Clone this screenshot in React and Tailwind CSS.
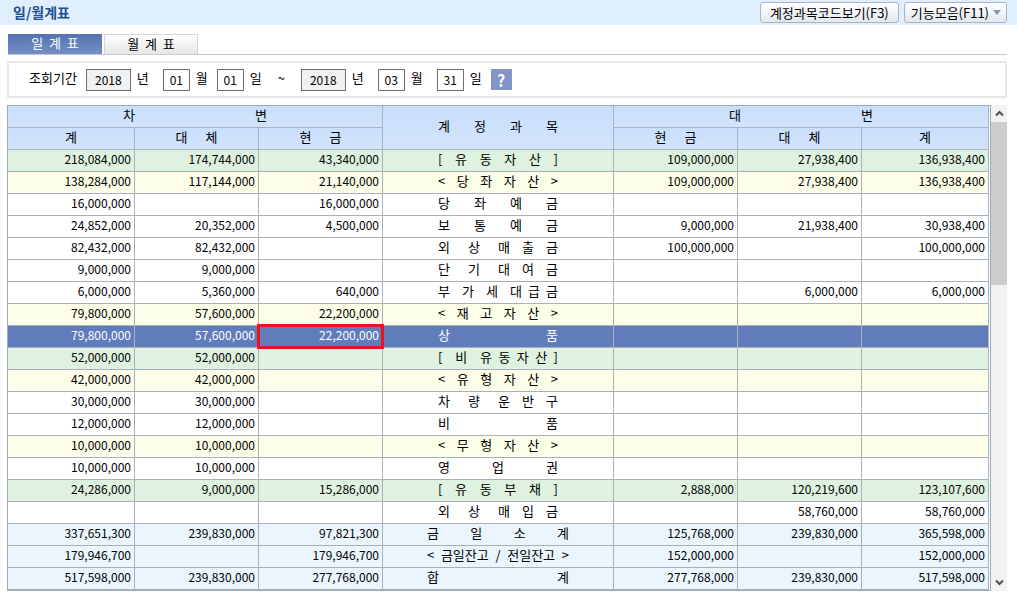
import { useState } from "react";

const FONT = "font-['Noto_Sans_CJK_KR','Liberation_Sans',sans-serif]";

// [debit total, debit transfer, debit cash, account, credit cash, credit transfer, credit total]
const rows = [
  { kind: "group", cells: ["218,084,000", "174,744,000", "43,340,000", "[  유  동  자  산  ]", "109,000,000", "27,938,400", "136,938,400"] },
  { kind: "sub", cells: ["138,284,000", "117,144,000", "21,140,000", "<  당  좌  자  산  >", "109,000,000", "27,938,400", "136,938,400"] },
  { kind: "item", cells: ["16,000,000", "", "16,000,000", "당 좌 예 금", "", "", ""] },
  { kind: "item", cells: ["24,852,000", "20,352,000", "4,500,000", "보 통 예 금", "9,000,000", "21,938,400", "30,938,400"] },
  { kind: "item", cells: ["82,432,000", "82,432,000", "", "외   상   매  출  금", "100,000,000", "", "100,000,000"] },
  { kind: "item", cells: ["9,000,000", "9,000,000", "", "단   기   대  여  금", "", "", ""] },
  { kind: "item", cells: ["6,000,000", "5,360,000", "640,000", "부  가  세  대 급 금", "", "6,000,000", "6,000,000"] },
  { kind: "sub", cells: ["79,800,000", "57,600,000", "22,200,000", "<  재  고  자  산  >", "", "", ""] },
  { kind: "item", cells: ["79,800,000", "57,600,000", "22,200,000", "상 품", "", "", ""] },
  { kind: "group", cells: ["52,000,000", "52,000,000", "", "[  비  유 동 자 산 ]", "", "", ""] },
  { kind: "sub", cells: ["42,000,000", "42,000,000", "", "<  유  형  자  산  >", "", "", ""] },
  { kind: "item", cells: ["30,000,000", "30,000,000", "", "차   량   운  반  구", "", "", ""] },
  { kind: "item", cells: ["12,000,000", "12,000,000", "", "비 품", "", "", ""] },
  { kind: "sub", cells: ["10,000,000", "10,000,000", "", "<  무  형  자  산  >", "", "", ""] },
  { kind: "item", cells: ["10,000,000", "10,000,000", "", "영 업 권", "", "", ""] },
  { kind: "group", cells: ["24,286,000", "9,000,000", "15,286,000", "[  유  동  부  채  ]", "2,888,000", "120,219,600", "123,107,600"] },
  { kind: "item", cells: ["", "", "", "외   상   매  입  금", "", "58,760,000", "58,760,000"] },
];

const totals = [
  ["337,651,300", "239,830,000", "97,821,300", "금 일 소 계", "125,768,000", "239,830,000", "365,598,000"],
  ["179,946,700", "", "179,946,700", "< 금일잔고 / 전일잔고 >", "152,000,000", "", "152,000,000"],
  ["517,598,000", "239,830,000", "277,768,000", "합 계", "277,768,000", "239,830,000", "517,598,000"],
];

const rowColor = {
  group: "bg-[#dff2e1]",
  sub: "bg-[#fdfee9]",
  item: "bg-white",
  total: "bg-[#eaf5fe]",
};

const Spread = ({ text, width }) => (
  <span className={`block mx-auto whitespace-pre-wrap [text-align-last:justify] ${width}`}>{text}</span>
);

const HeadCell = ({ children, ...props }) => (
  <th
    {...props}
    className="h-[22px] p-0 pb-[3px] border-r border-b border-[#a3b4c8] bg-linear-to-b from-[#c9dffb] to-[#d3e4fc] text-[13px] leading-[18px] font-normal"
  >
    {children}
  </th>
);

const LedgerRow = ({ kind, cells, selected, marked, onSelect }) => (
  <tr onClick={onSelect} className={selected ? "bg-[#607cbb] text-white" : rowColor[kind]}>
    {cells.map((cell, i) => (
      <td
        key={i}
        className={`relative h-[22px] p-0 pb-[3px] border-r border-b border-[#a9b0b8] leading-[18px] ${
          i === 3 ? "text-[13px]" : "pr-[3px] text-right text-[12px]"
        }`}
      >
        {i === 3 ? <Spread text={cell} width={kind === "total" ? "w-[142px]" : "w-[120px]"} /> : cell}
        {marked && i === 2 && <span className="absolute -inset-[2px] border-3 border-[#ea1420] z-10" />}
      </td>
    ))}
  </tr>
);

const DateField = ({ label, unit, value, onChange, year }) => (
  <label className="flex items-center gap-[6px]">
    <input
      aria-label={label}
      value={value}
      onChange={(e) => onChange(e.target.value)}
      className={`h-[22px] border border-[#6f6f6f] text-center text-xs ${
        year ? "w-[45px] bg-[#f1f1f1]" : "w-[27px] bg-white"
      }`}
    />
    <span className="pb-[3px]">{unit}</span>
  </label>
);

const Chevron = ({ d }) => (
  <svg width="9" height="7" viewBox="0 0 9 7" fill="none" stroke="#505050" strokeWidth="2">
    <path d={d} />
  </svg>
);

const App = () => {
  const [tab, setTab] = useState("daily");
  const [selected, setSelected] = useState(8);
  const [period, setPeriod] = useState({
    y1: "2018", m1: "01", d1: "01", y2: "2018", m2: "03", d2: "31",
  });

  const bind = (key) => ({
    value: period[key],
    onChange: (value) => setPeriod({ ...period, [key]: value }),
  });

  const tabClass = (name) =>
    `w-[94px] h-5 pb-[2px] text-[13px] leading-[18px] whitespace-pre ${
      tab === name
        ? "bg-linear-to-b from-[#5672ae] to-[#7390c6] text-white"
        : "bg-linear-to-b from-white to-[#e6e6e6] border border-b-0 border-[#d6d6d6] text-black"
    }`;

  const topButton =
    "h-[21px] flex items-center border border-[#a9b4c2] rounded-[3px] bg-linear-to-b from-white to-[#e3e9f1] text-[13px] leading-[18px] whitespace-nowrap";

  return (
    <div className={`min-h-screen bg-white text-black text-[13px] ${FONT}`}>
      {/* Title bar */}
      <header className="h-[25px] flex items-center justify-between pl-[13px] pr-[10px] bg-[#dfeffd]">
        <h1 className="font-bold text-[14px] text-[#1f4f93]">일/월계표</h1>
        <div className="flex gap-[5px]">
          <button className={`${topButton} px-[9px]`}>계정과목코드보기(F3)</button>
          <button className={`${topButton} pl-[6px] pr-[5px] gap-[4px]`}>
            기능모음(F11)
            <svg width="8" height="5" viewBox="0 0 8 5">
              <path d="M0 0h8L4 5z" fill="#8496ad" />
            </svg>
          </button>
        </div>
      </header>

      <main className="pl-[7px] pr-[10px]">
        {/* Tabs */}
        <div role="tablist" className="flex gap-[2px] mt-[9px] ml-px border-b border-[#c9c9c9]">
          <button role="tab" aria-selected={tab === "daily"} className={tabClass("daily")} onClick={() => setTab("daily")}>
            {"일  계  표"}
          </button>
          <button role="tab" aria-selected={tab === "monthly"} className={tabClass("monthly")} onClick={() => setTab("monthly")}>
            {"월  계  표"}
          </button>
        </div>

        {/* Period filter */}
        <div className="flex items-center h-[37px] mt-[6px] pl-[20px] border-2 border-[#e3e9ee]">
          <span className="mr-[9px] pb-[3px]">조회기간</span>
          <DateField label="시작 년" unit="년" year {...bind("y1")} />
          <div className="flex gap-[9px] ml-[14px]">
            <DateField label="시작 월" unit="월" {...bind("m1")} />
            <DateField label="시작 일" unit="일" {...bind("d1")} />
          </div>
          <span className="w-[39px] pb-[3px] text-center">~</span>
          <DateField label="종료 년" unit="년" year {...bind("y2")} />
          <div className="flex gap-[14px] ml-[14px]">
            <DateField label="종료 월" unit="월" {...bind("m2")} />
            <DateField label="종료 일" unit="일" {...bind("d2")} />
          </div>
          <button className="ml-[9px] w-[21px] h-[21px] bg-[#8294c8] text-white font-bold text-base leading-5">?</button>
        </div>

        {/* Ledger */}
        <div className="flex mt-[7px]">
          <div className="flex-1 pr-px border border-[#9aaabd]">
            <table className="w-full table-fixed border-separate border-spacing-0">
              <colgroup>
                <col className="w-[127px]" />
                <col className="w-[124px]" />
                <col className="w-[124px]" />
                <col />
                <col className="w-[124px]" />
                <col className="w-[124px]" />
                <col className="w-[127px]" />
              </colgroup>
              <thead>
                <tr>
                  <HeadCell colSpan={3}><Spread text="차 변" width="w-[144px]" /></HeadCell>
                  <HeadCell rowSpan={2}><Spread text="계 정 과 목" width="w-[120px]" /></HeadCell>
                  <HeadCell colSpan={3}><Spread text="대 변" width="w-[144px]" /></HeadCell>
                </tr>
                <tr>
                  <HeadCell>계</HeadCell>
                  <HeadCell><Spread text="대 체" width="w-[42px]" /></HeadCell>
                  <HeadCell><Spread text="현 금" width="w-[42px]" /></HeadCell>
                  <HeadCell><Spread text="현 금" width="w-[42px]" /></HeadCell>
                  <HeadCell><Spread text="대 체" width="w-[42px]" /></HeadCell>
                  <HeadCell>계</HeadCell>
                </tr>
              </thead>
              <tbody>
                {rows.map((row, i) => (
                  <LedgerRow
                    key={i}
                    kind={row.kind}
                    cells={row.cells}
                    selected={selected === i}
                    marked={i === 8}
                    onSelect={() => setSelected(i)}
                  />
                ))}
              </tbody>
              <tfoot>
                {totals.map((cells, i) => (
                  <LedgerRow key={i} kind="total" cells={cells} />
                ))}
              </tfoot>
            </table>
          </div>

          {/* Scrollbar */}
          <div className="w-4 flex flex-col bg-[#f2f2f2]">
            <button aria-label="위로" className="h-[17px] flex items-center justify-center">
              <Chevron d="M1 5.5L4.500 2L8 5.500" />
            </button>
            <div className="flex-1">
              <div className="h-[36%] bg-[#cdcdcd]" />
            </div>
            <button aria-label="아래로" className="h-[17px] flex items-center justify-center">
              <Chevron d="M1 1.500L4.500 5L8 1.500" />
            </button>
          </div>
        </div>
      </main>
    </div>
  );
};

export default App;
